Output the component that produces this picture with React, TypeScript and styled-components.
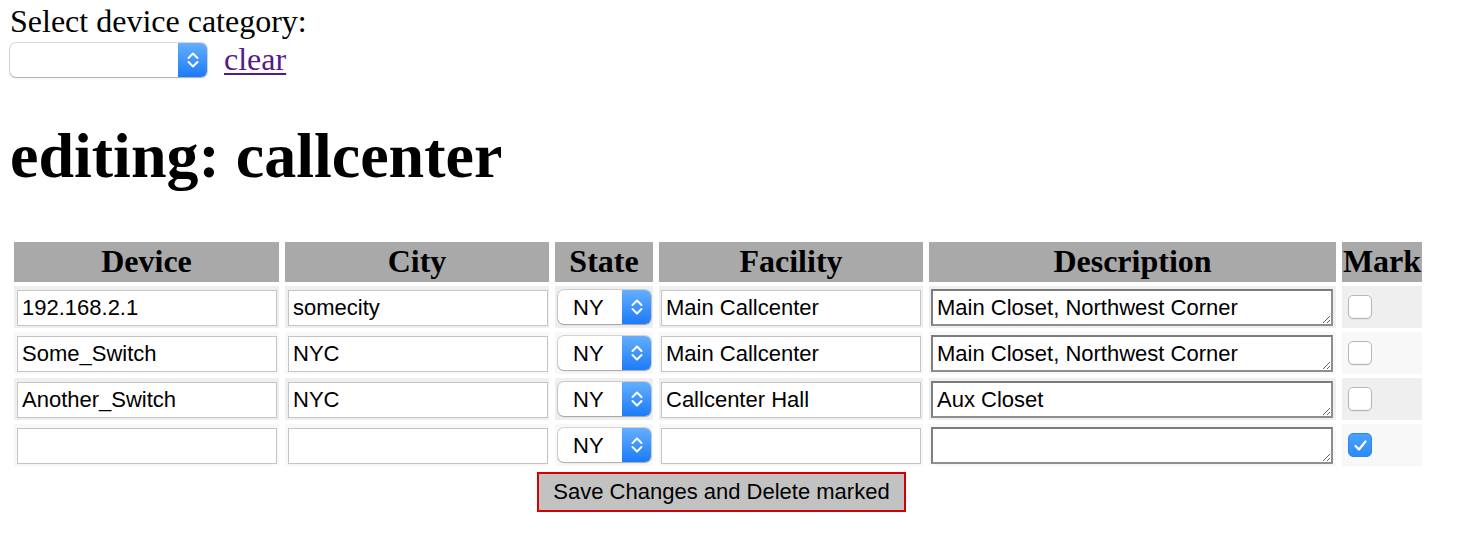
import React, { useState } from "react";
import styled, { createGlobalStyle } from "styled-components";

const GlobalStyle = createGlobalStyle`
  html, body { margin: 0; padding: 0; background: #ffffff; }
  body {
    font-family: "Liberation Serif", "Times New Roman", serif;
    color: #000;
  }
`;

const Page = styled.main`
  padding: 3px 10px 0 10px;
`;

const Prompt = styled.div`
  font-size: 32px;
  line-height: 36px;
`;

const ControlRow = styled.div`
  display: flex;
  align-items: center;
  gap: 17px;
  margin-top: 4px;
  height: 34px;
`;

const SelectShell = styled.div<{ $width: number }>`
  display: flex;
  width: ${(p) => p.$width}px;
  height: 34px;
  flex: none;
  border-radius: 6px;
  background: #fff;
  box-shadow: 0 0 0 1px rgba(0, 0, 0, 0.14), 0 1px 1.5px rgba(0, 0, 0, 0.22);
  overflow: hidden;
`;

const NativeSelect = styled.select`
  appearance: none;
  -webkit-appearance: none;
  flex: 1;
  min-width: 0;
  border: none;
  outline: none;
  background: transparent;
  font-family: "Liberation Sans", Arial, sans-serif;
  font-size: 22px;
  color: #000;
  padding: 0 0 0 15px;
  margin: 0;
`;

const Stepper = styled.span`
  width: 29px;
  flex: none;
  display: flex;
  align-items: center;
  justify-content: center;
  background: linear-gradient(#64affe, #1c7bf9);
`;

const ClearLink = styled.a`
  font-size: 32px;
  line-height: 36px;
  padding-bottom: 3px;
  color: #551a8b;
  text-decoration: underline;
  text-underline-offset: 3px;
  text-decoration-thickness: 2px;
`;

const Heading = styled.h1`
  margin: 42px 0 0 0;
  font-size: 64px;
  line-height: 74px;
  font-weight: bold;
`;

const Table = styled.div`
  margin: 49px 0 0 4px;
  display: grid;
  grid-template-columns: 265px 264px 98px 264px 407px 80px;
  column-gap: 6px;
  row-gap: 4px;
  width: max-content;
`;

const HeaderCell = styled.div`
  background: #a9a9a9;
  font-size: 32px;
  line-height: 36px;
  font-weight: bold;
  padding: 1px 0 3px 0;
  text-align: center;
  white-space: nowrap;
`;

const Row = styled.div`
  display: contents;
`;

const DataCell = styled.div<{ $shade: boolean; $pad: string }>`
  background: ${(p) => (p.$shade ? "#efefef" : "#f8f8f8")};
  height: 42px;
  box-sizing: border-box;
  padding: ${(p) => p.$pad};
  display: flex;
  align-items: flex-start;
`;

const TextInput = styled.input`
  width: 260px;
  height: 36px;
  box-sizing: border-box;
  margin: 0;
  border: 1px solid #c4c4c4;
  padding: 0 4px;
  font-family: "Liberation Sans", Arial, sans-serif;
  font-size: 22px;
  color: #000;
  background: #fff;
  outline: none;
`;

const TextArea = styled.textarea`
  width: 402px;
  height: 37px;
  box-sizing: border-box;
  margin: 0;
  border: 2px solid #8e8e8e;
  border-top-color: #7b7b7b;
  border-left-color: #7f7f7f;
  padding: 4px 4px 0 4px;
  font-family: "Liberation Sans", Arial, sans-serif;
  font-size: 22px;
  line-height: 25px;
  color: #000;
  background: #fff;
  outline: none;
  overflow: hidden;
`;

const CheckBox = styled.span<{ $checked: boolean }>`
  width: 24px;
  height: 24px;
  box-sizing: border-box;
  border-radius: 5px;
  display: flex;
  align-items: center;
  justify-content: center;
  cursor: pointer;
  border: 1px solid ${(p) => (p.$checked ? "#2f87ee" : "#b7b7b7")};
  background: ${(p) =>
    p.$checked ? "linear-gradient(#4aa2fd, #2d8bf7)" : "#ffffff"};
  box-shadow: ${(p) =>
    p.$checked ? "none" : "inset 0 -1px 1px rgba(0,0,0,0.06), 0 1px 0 rgba(0,0,0,0.05)"};
`;

const ButtonRow = styled.div`
  grid-column: 1 / -1;
  display: flex;
  justify-content: center;
  padding: 2px 0 0 7px;
`;

const SaveButton = styled.button`
  width: 369px;
  height: 40px;
  box-sizing: border-box;
  margin: 0;
  border: 2px solid #d60000;
  background: #c2c2c2;
  font-family: "Liberation Sans", Arial, sans-serif;
  font-size: 22px;
  color: #000;
  padding: 0;
  cursor: pointer;
`;

const Chevrons = () => (
  <svg width="12" height="24" viewBox="0 0 12 24" aria-hidden="true">
    <path d="M1.5 10 L6 5.5 L10.5 10" fill="none" stroke="#fff" strokeWidth="2" strokeLinecap="round" strokeLinejoin="round" />
    <path d="M1.5 14 L6 18.5 L10.5 14" fill="none" stroke="#fff" strokeWidth="2" strokeLinecap="round" strokeLinejoin="round" />
  </svg>
);

const Check = () => (
  <svg width="15" height="13" viewBox="0 0 15 13" aria-hidden="true">
    <path d="M2.5 7 L6 10.5 L12.5 2.5" fill="none" stroke="#fff" strokeWidth="2.2" strokeLinecap="round" strokeLinejoin="round" />
  </svg>
);

type Device = {
  device: string;
  city: string;
  state: string;
  facility: string;
  description: string;
  mark: boolean;
};

const initialRows: Device[] = [
  { device: "192.168.2.1", city: "somecity", state: "NY", facility: "Main Callcenter", description: "Main Closet, Northwest Corner", mark: false },
  { device: "Some_Switch", city: "NYC", state: "NY", facility: "Main Callcenter", description: "Main Closet, Northwest Corner", mark: false },
  { device: "Another_Switch", city: "NYC", state: "NY", facility: "Callcenter Hall", description: "Aux Closet", mark: false },
  { device: "", city: "", state: "NY", facility: "", description: "", mark: true },
];

const headers = ["Device", "City", "State", "Facility", "Description", "Mark"];

export default function App() {
  const [rows, setRows] = useState<Device[]>(initialRows);

  const update = (i: number, patch: Partial<Device>) =>
    setRows((r) => r.map((row, j) => (j === i ? { ...row, ...patch } : row)));

  return (
    <>
      <GlobalStyle />
      <Page>
        <Prompt>Select device category:</Prompt>
        <ControlRow>
          <SelectShell $width={197}>
            <NativeSelect defaultValue="">
              <option value=""></option>
              <option value="callcenter">callcenter</option>
            </NativeSelect>
            <Stepper>
              <Chevrons />
            </Stepper>
          </SelectShell>
          <ClearLink href="#">clear</ClearLink>
        </ControlRow>
        <Heading>editing: callcenter</Heading>
        <Table>
          {headers.map((h) => (
            <HeaderCell key={h}>{h}</HeaderCell>
          ))}
          {rows.map((row, i) => {
            const shade = i % 2 === 0;
            return (
              <Row key={i}>
                <DataCell $shade={shade} $pad="4px 2px 0 3px">
                  <TextInput value={row.device} onChange={(e) => update(i, { device: e.target.value })} />
                </DataCell>
                <DataCell $shade={shade} $pad="4px 2px 0 3px">
                  <TextInput value={row.city} onChange={(e) => update(i, { city: e.target.value })} />
                </DataCell>
                <DataCell $shade={shade} $pad="4px 2px 0 3px">
                  <SelectShell $width={93}>
                    <NativeSelect value={row.state} onChange={(e) => update(i, { state: e.target.value })}>
                      <option value="NY">NY</option>
                      <option value="NJ">NJ</option>
                      <option value="CT">CT</option>
                    </NativeSelect>
                    <Stepper>
                      <Chevrons />
                    </Stepper>
                  </SelectShell>
                </DataCell>
                <DataCell $shade={shade} $pad="4px 2px 0 2px">
                  <TextInput value={row.facility} onChange={(e) => update(i, { facility: e.target.value })} />
                </DataCell>
                <DataCell $shade={shade} $pad="3px 3px 0 2px">
                  <TextArea value={row.description} onChange={(e) => update(i, { description: e.target.value })} />
                </DataCell>
                <DataCell $shade={shade} $pad="9px 0 0 6px">
                  <CheckBox
                    role="checkbox"
                    aria-checked={row.mark}
                    $checked={row.mark}
                    onClick={() => update(i, { mark: !row.mark })}
                  >
                    {row.mark && <Check />}
                  </CheckBox>
                </DataCell>
              </Row>
            );
          })}
          <ButtonRow>
            <SaveButton type="button">Save Changes and Delete marked</SaveButton>
          </ButtonRow>
        </Table>
      </Page>
    </>
  );
}
